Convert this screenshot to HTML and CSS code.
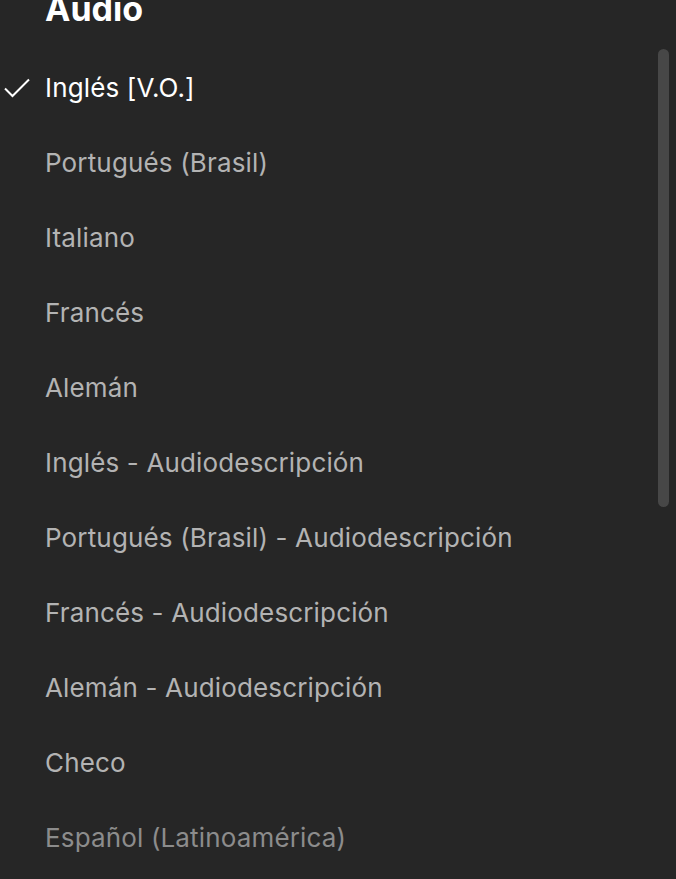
FILE: index.html
```html
<!DOCTYPE html>
<html lang="es">
<head>
    <meta charset="UTF-8">
    <meta name="viewport" content="width=device-width, initial-scale=1.0">
    <title>Audio</title>
    <link rel="stylesheet" href="styles.css">
</head>
<body>
<div class="panel">
    <div class="list">
        <h2 class="title">Audio</h2>
        <ul class="tracks">
            <li class="track selected">
                <svg class="check" viewBox="0 0 28 22" width="28" height="22">
                    <path d="M2 11.5 L9.5 19 L26 2.5" fill="none" stroke="#fff" stroke-width="2"/>
                </svg>
                Inglés [V.O.]
            </li>
            <li class="track">Portugués (Brasil)</li>
            <li class="track">Italiano</li>
            <li class="track">Francés</li>
            <li class="track">Alemán</li>
            <li class="track">Inglés - Audiodescripción</li>
            <li class="track">Portugués (Brasil) - Audiodescripción</li>
            <li class="track">Francés - Audiodescripción</li>
            <li class="track">Alemán - Audiodescripción</li>
            <li class="track">Checo</li>
            <li class="track faded">Español (Latinoamérica)</li>
        </ul>
    </div>
    <div class="scrollbar">
        <div class="thumb"></div>
    </div>
</div>
</body>
</html>
```

FILE: styles.css
```css
html, body {
    margin: 0;
    height: 100%;
    background-color: #262626;
}
body {
    font-family: Inter, "Noto Sans", sans-serif;
    overflow: hidden;
}
.panel {
    display: flex;
    height: 100%;
}
.list {
    flex: 1;
    padding-left: 45px;
}
.title {
    margin: -12px 0 0 0;
    font-size: 34px;
    font-weight: 700;
    line-height: 42px;
    color: #fff;
}
.tracks {
    list-style: none;
    margin: 20px 0 0 0;
    padding: 0;
}
.track {
    position: relative;
    height: 75px;
    line-height: 75px;
    font-size: 26px;
    letter-spacing: 0.15px;
    color: #b3b3b3;
}
.track.selected {
    color: #fff;
}
.track.faded {
    color: #8c8c8c;
}
.check {
    position: absolute;
    left: -42px;
    top: 27px;
}
.scrollbar {
    width: 18px;
    padding-top: 49px;
}
.thumb {
    width: 11px;
    height: 458px;
    border-radius: 6px;
    background-color: #474747;
}
```
